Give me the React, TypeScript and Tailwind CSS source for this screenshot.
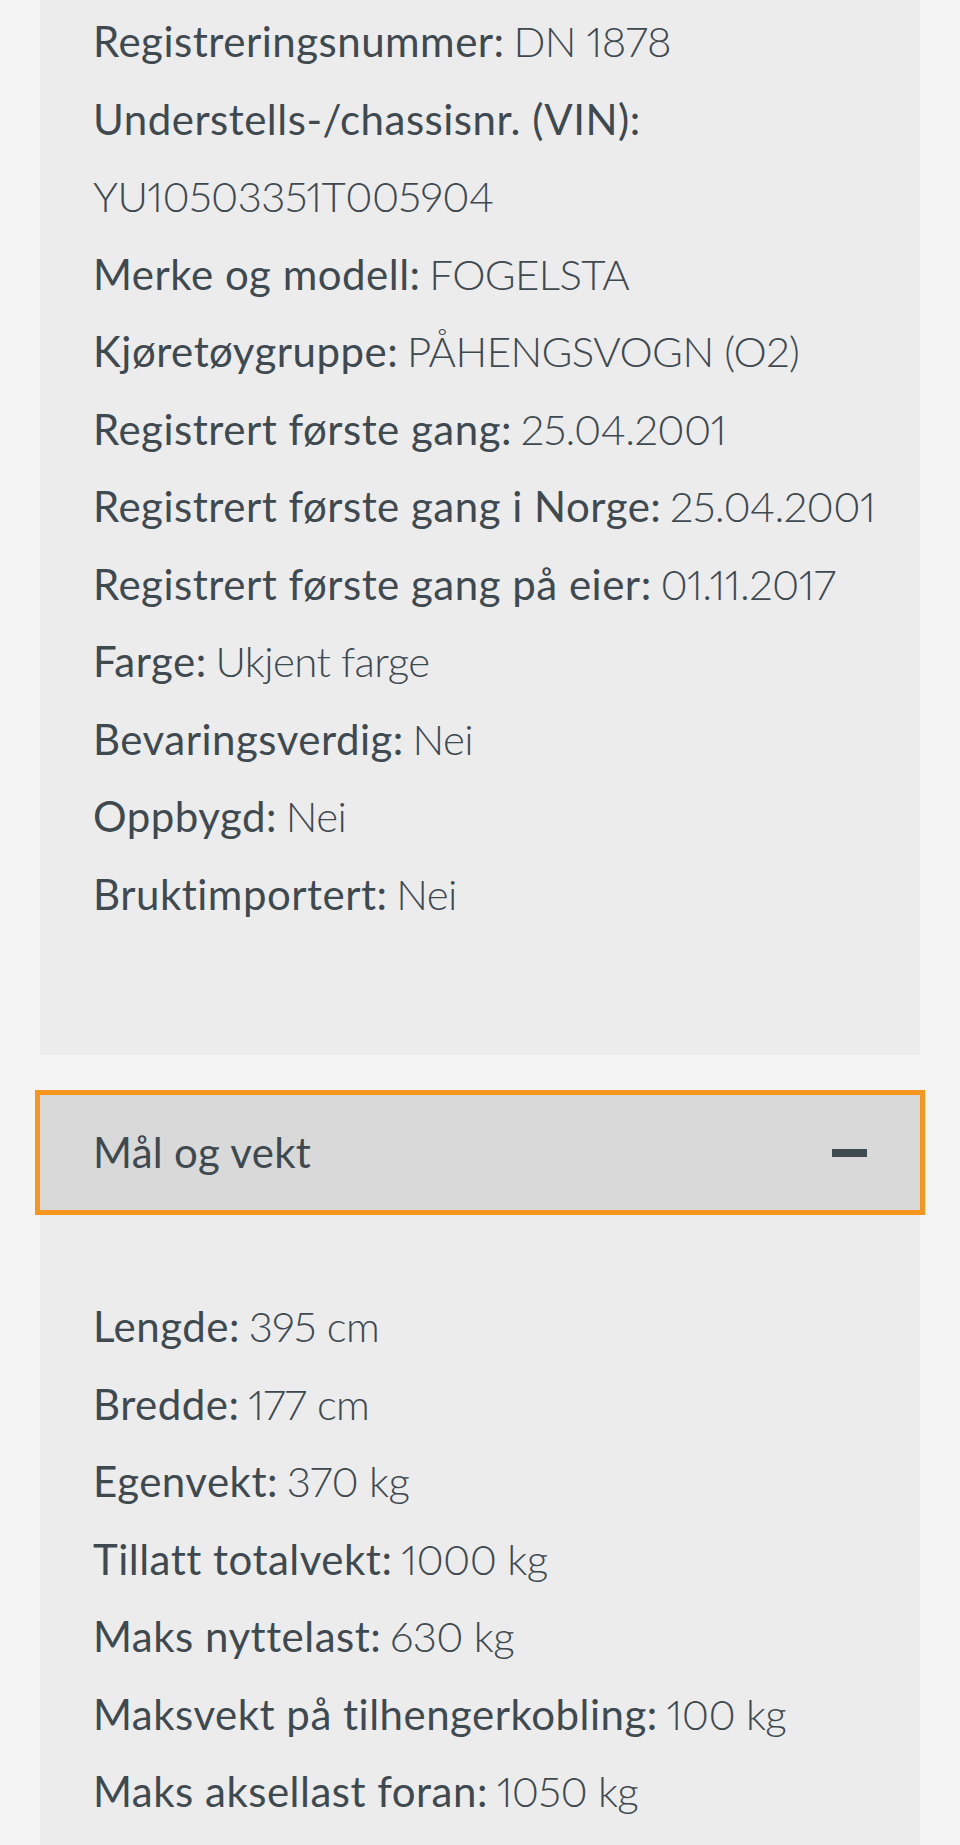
const general = [
  { label: 'Registreringsnummer:', value: 'DN 1878' },
  { label: 'Understells-/chassisnr. (VIN):', value: '' },
  { label: '', value: 'YU10503351T005904' },
  { label: 'Merke og modell:', value: 'FOGELSTA' },
  { label: 'Kjøretøygruppe:', value: 'PÅHENGSVOGN (O2)' },
  { label: 'Registrert første gang:', value: '25.04.2001' },
  { label: 'Registrert første gang i Norge:', value: '25.04.2001' },
  { label: 'Registrert første gang på eier:', value: '01.11.2017' },
  { label: 'Farge:', value: 'Ukjent farge' },
  { label: 'Bevaringsverdig:', value: 'Nei' },
  { label: 'Oppbygd:', value: 'Nei' },
  { label: 'Bruktimportert:', value: 'Nei' },
];

const dimensions = [
  { label: 'Lengde:', value: '395 cm' },
  { label: 'Bredde:', value: '177 cm' },
  { label: 'Egenvekt:', value: '370 kg' },
  { label: 'Tillatt totalvekt:', value: '1000 kg' },
  { label: 'Maks nyttelast:', value: '630 kg' },
  { label: 'Maksvekt på tilhengerkobling:', value: '100 kg' },
  { label: 'Maks aksellast foran:', value: '1050 kg' },
];

function Line({ label, value }: { label: string; value: string }) {
  return (
    <p className="whitespace-nowrap">
      {label && <span className="font-normal tracking-[0.5px]">{label}</span>}
      {label && value && <span className="tracking-[-2px]"> </span>}
      {value && <span className="font-light tracking-[-0.6px] proportional-nums">{value}</span>}
    </p>
  );
}

export default function App() {
  return (
    <div
      className="min-h-[1845px] bg-[#f4f4f4] px-[40px] text-[#3e4950] text-[42px] leading-[77.5px]"
      style={{ fontFamily: 'Lato, "Noto Sans", sans-serif' }}
    >
      <section className="bg-[#ececec] pl-[53px] pr-[40px] pt-[3px] pb-[122px]">
        {general.map((r, i) => (
          <Line key={i} label={r.label} value={r.value} />
        ))}
      </section>

      <div className="mt-[40px] flex h-[115px] items-center justify-between bg-[#d9d9d9] pl-[53px] pr-[53px] outline-[5px] outline-solid outline-[#f7961f]">
        <h2 className="font-normal tracking-[0.3px]">Mål og vekt</h2>
        <span className="block h-[8px] w-[35px] bg-[#414b52]" />
      </div>

      <section className="bg-[#ececec] pl-[53px] pr-[40px] pt-[78px] pb-[20px]">
        {dimensions.map((r) => (
          <Line key={r.label} label={r.label} value={r.value} />
        ))}
      </section>
    </div>
  );
}
